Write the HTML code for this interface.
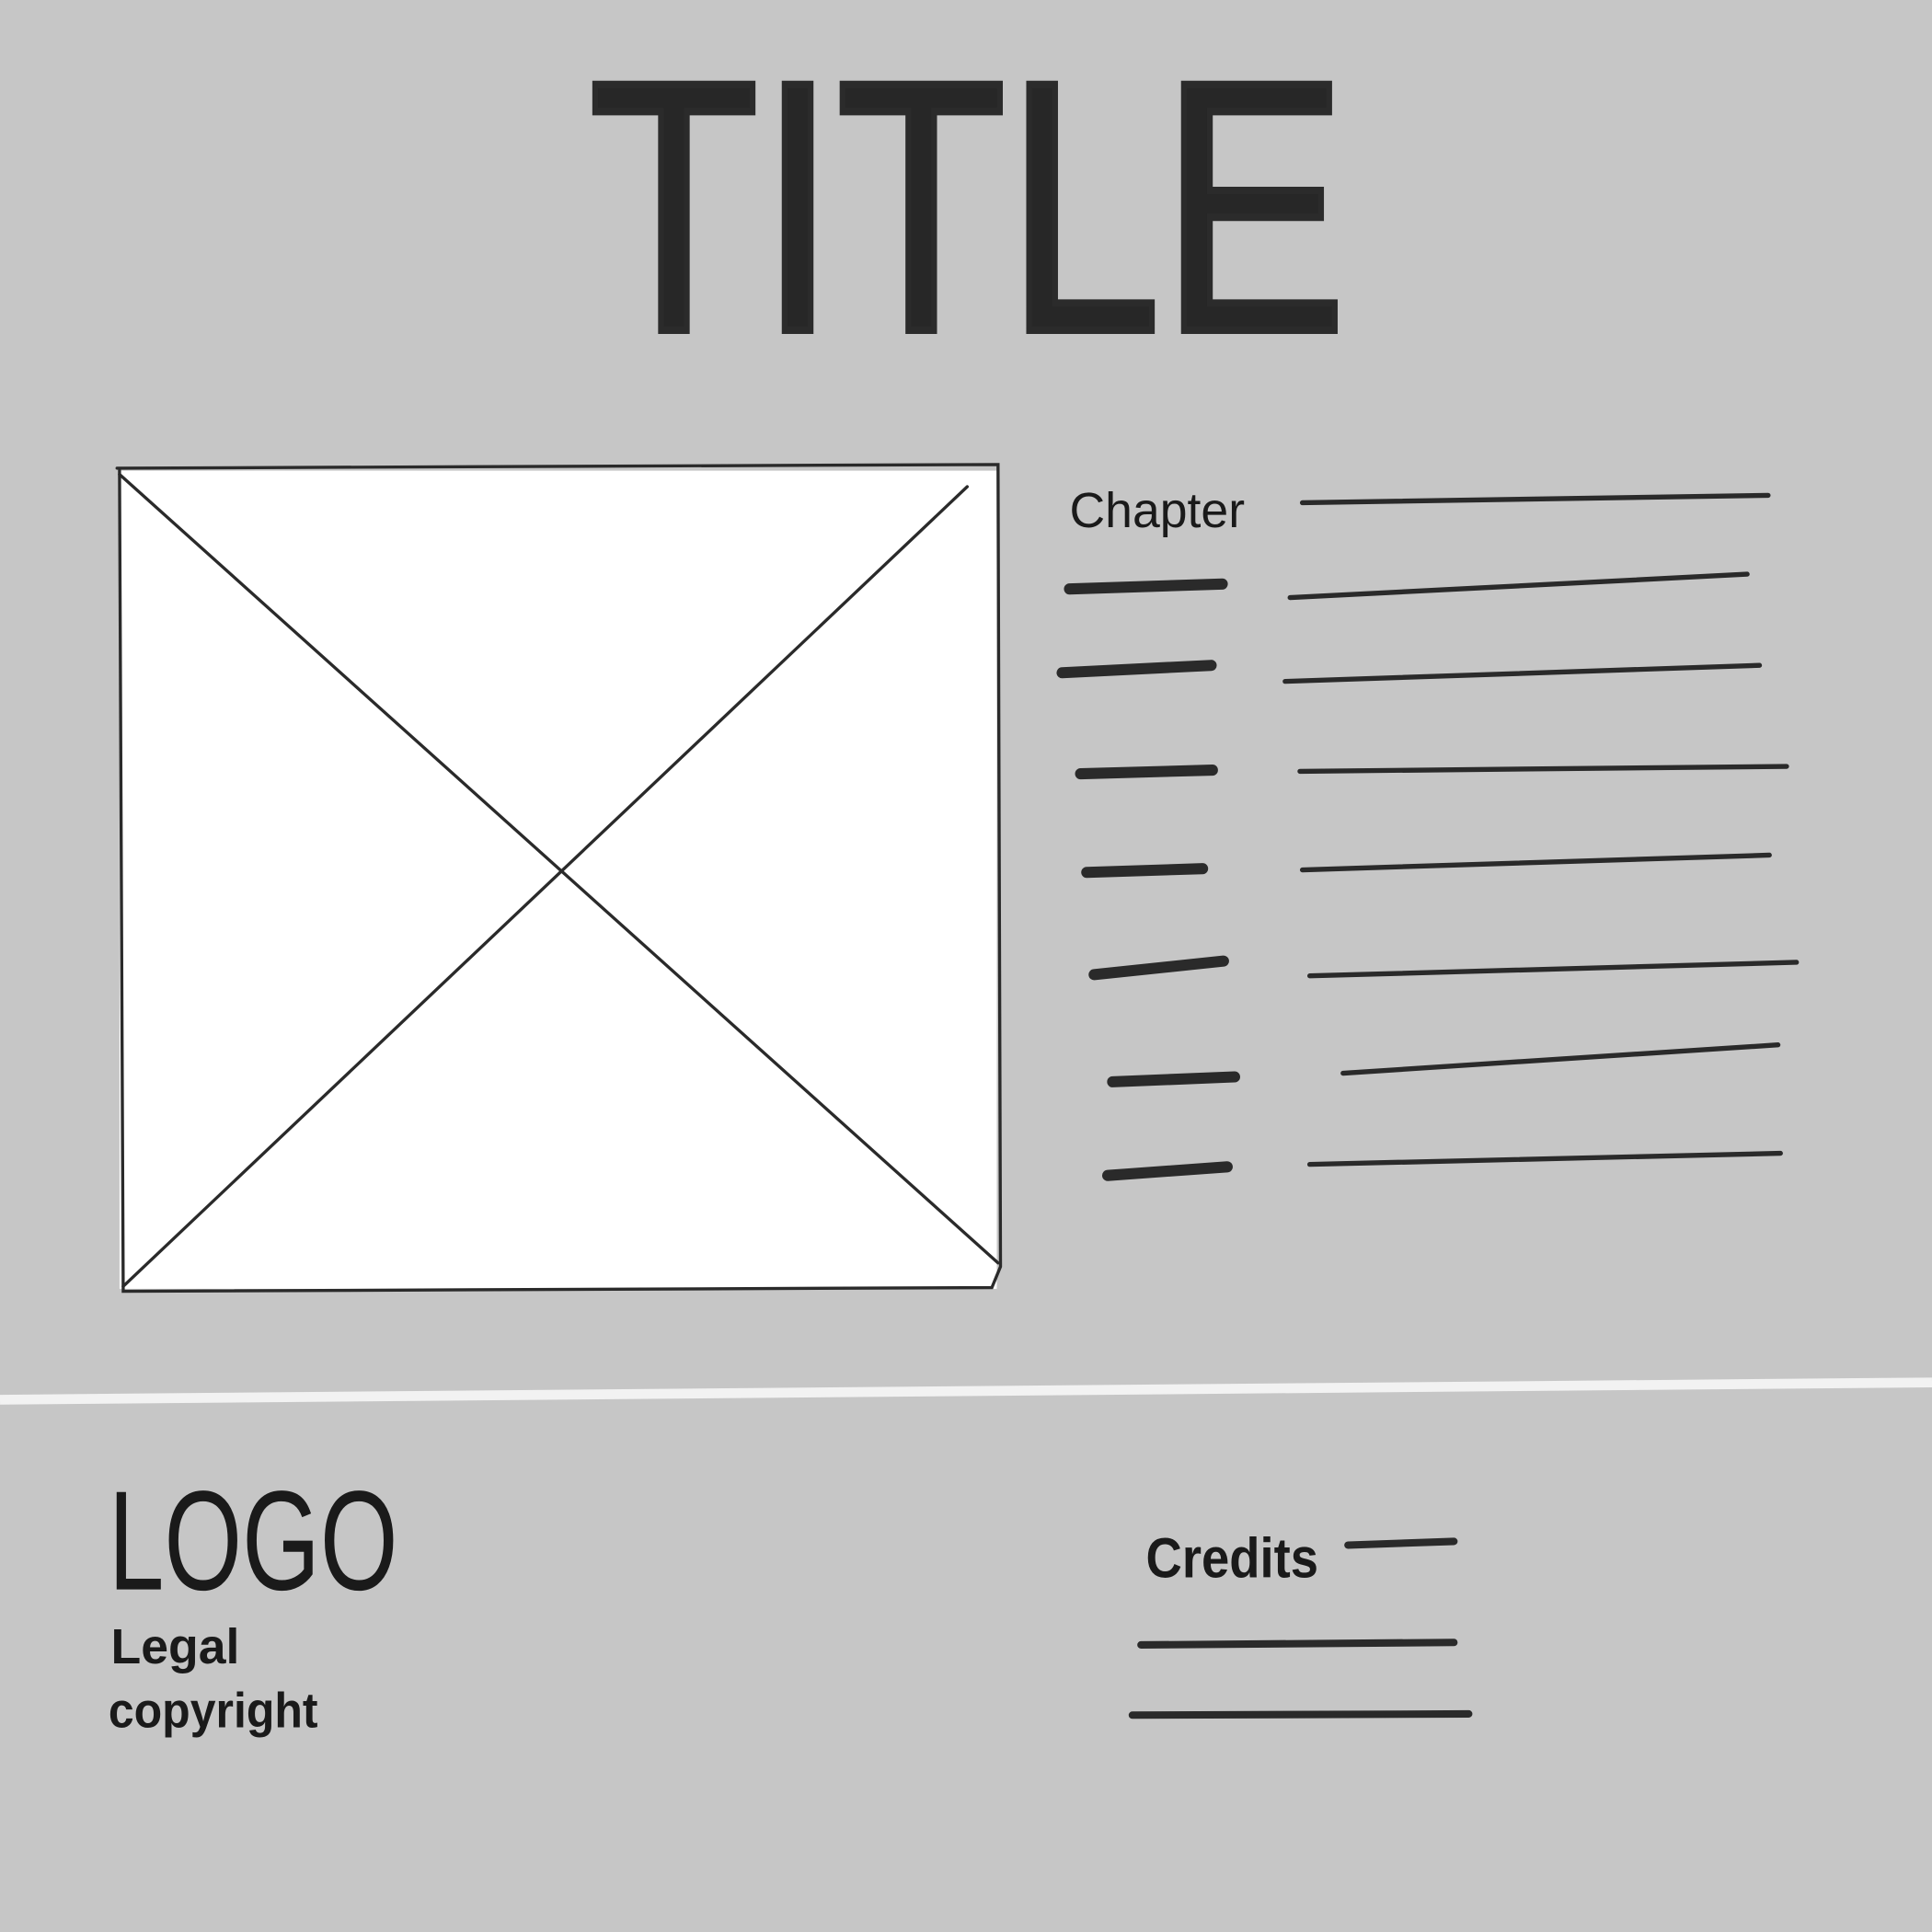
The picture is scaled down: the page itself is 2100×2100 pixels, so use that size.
<!DOCTYPE html>
<html><head><meta charset="utf-8"><style>
html,body{margin:0;padding:0;background:#c6c6c6;}
svg{display:block;}
text{font-family:"Liberation Sans",sans-serif;fill:#1a1a1a;}
</style></head><body>
<svg width="2100" height="2100" viewBox="0 0 1568 1568" xmlns="http://www.w3.org/2000/svg">
<rect width="1568" height="1568" fill="#c6c6c6"/>
<text x="478" y="268" font-size="290" textLength="615" lengthAdjust="spacingAndGlyphs" fill="#1e1e1e" stroke="#1e1e1e" stroke-width="6" opacity="0.92">TITLE</text>
<rect x="97" y="382" width="712" height="664" fill="#fff"/>
<g stroke="#2a2a2a" stroke-width="2.5" fill="none" stroke-linecap="round">
<path d="M95 380 L810 377 L812 1028 L805 1045 L100 1048 L97 382"/>
<path d="M97 385 L810 1025"/>
<path d="M785 395 L100 1044"/>
</g>
<text x="868" y="428" font-size="40" fill="#1a1a1a">Chapter</text>
<g stroke="#2a2a2a" stroke-width="4" fill="none" stroke-linecap="round">
<path d="M1057 408 L1435 402"/>
<path d="M1047 485 L1418 466"/>
<path d="M1043 553 L1428 540"/>
<path d="M1055 626 L1450 622"/>
<path d="M1057 706 L1436 694"/>
<path d="M1063 792 L1458 781"/>
<path d="M1090 871 L1443 848"/>
<path d="M1063 945 L1445 936"/>
</g>
<g stroke="#2a2a2a" stroke-width="9" fill="none" stroke-linecap="round">
<path d="M868 478 L992 474"/>
<path d="M862 546 L983 540"/>
<path d="M877 628 L984 625"/>
<path d="M882 708 L976 705"/>
<path d="M888 791 L993 780"/>
<path d="M903 878 L1002 874"/>
<path d="M899 954 L996 947"/>
</g>
<path d="M0 1136 L1568 1122" stroke="#f2f2f2" stroke-width="8"/>
<text x="88" y="1290" font-size="115" textLength="235" lengthAdjust="spacingAndGlyphs">LOGO</text>
<text x="90" y="1350" font-size="40" font-weight="bold">Legal</text>
<text x="88" y="1402" font-size="40" font-weight="bold" textLength="170" lengthAdjust="spacingAndGlyphs">copyright</text>
<text x="930" y="1280" font-size="46" font-weight="bold" textLength="140" lengthAdjust="spacingAndGlyphs">Credits</text>
<g stroke="#2a2a2a" stroke-width="6" fill="none" stroke-linecap="round">
<path d="M1094 1254 L1180 1251"/>
<path d="M926 1335 L1180 1333"/>
<path d="M919 1392 L1192 1391"/>
</g>
</svg>
</body></html>
